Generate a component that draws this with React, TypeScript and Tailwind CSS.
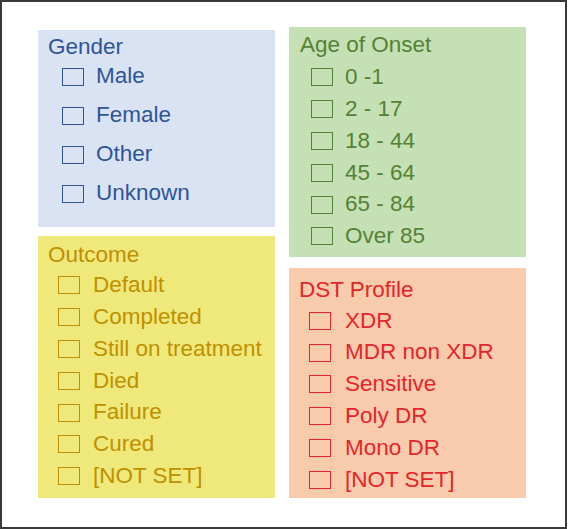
import React from 'react';

interface FilterPanelProps {
  title: string;
  items: string[];
  panelClass: string;
  boxClass: string;
  headerClass: string;
  rowClass: string;
  listClass: string;
}

const FilterPanel: React.FC<FilterPanelProps> = ({ title, items, panelClass, boxClass, headerClass, rowClass, listClass }) => (
  <div className={`w-[237px] ${panelClass}`}>
    <div className={`flex items-center whitespace-nowrap ${headerClass}`}>{title}</div>
    <div className={listClass}>
      {items.map(item => (
        <label key={item} className={`flex items-center gap-[12px] whitespace-nowrap ${rowClass}`}>
          <span className={`w-[22px] h-[18px] border-[1.5px] shrink-0 ${boxClass}`} />
          <span>{item}</span>
        </label>
      ))}
    </div>
  </div>
);

export default function App() {
  return (
    <div
      className="w-[567px] h-[529px] border-2 border-[#3a3a3a] bg-white flex gap-[14px] pl-[36px] pt-[25px] text-[22.5px] leading-none"
      style={{ fontFamily: '"Liberation Sans", Arial, sans-serif' }}
    >
      <div className="flex flex-col gap-[9px] mt-[3px]">
        <FilterPanel
          title="Gender"
          items={['Male', 'Female', 'Other', 'Unknown']}
          panelClass="h-[197px] bg-[#dae3f3] text-[#2f5597] pt-[8px] pl-[10px]"
          boxClass="border-[#2f5597]"
          headerClass="h-[19px]"
          rowClass="h-[39px]"
          listClass="pl-[14px]"
        />
        <FilterPanel
          title="Outcome"
          items={['Default', 'Completed', 'Still on treatment', 'Died', 'Failure', 'Cured', '[NOT SET]']}
          panelClass="h-[262px] bg-[#efe87a] text-[#bf9000] pt-[4.5px] pl-[10px]"
          boxClass="border-[#bf9000]"
          headerClass="h-[29px]"
          rowClass="h-[31.8px] gap-[13px]"
          listClass="pl-[10px]"
        />
      </div>
      <div className="flex flex-col gap-[11px]">
        <FilterPanel
          title="Age of Onset"
          items={['0 -1', '2 - 17', '18 - 44', '45 - 64', '65 - 84', 'Over 85']}
          panelClass="h-[230px] bg-[#c5e0b4] text-[#548235] pt-[2.5px] pl-[11px]"
          boxClass="border-[#548235]"
          headerClass="h-[32px]"
          rowClass="h-[31.8px]"
          listClass="pl-[11px]"
        />
        <FilterPanel
          title="DST Profile"
          items={['XDR', 'MDR non XDR', 'Sensitive', 'Poly DR', 'Mono DR', '[NOT SET]']}
          panelClass="h-[230px] bg-[#f8cbad] text-[#e5252a] pt-[7px] pl-[10px]"
          boxClass="border-[#e5252a]"
          headerClass="h-[30px]"
          rowClass="h-[31.8px] gap-[14px]"
          listClass="pl-[10px]"
        />
      </div>
    </div>
  );
}
